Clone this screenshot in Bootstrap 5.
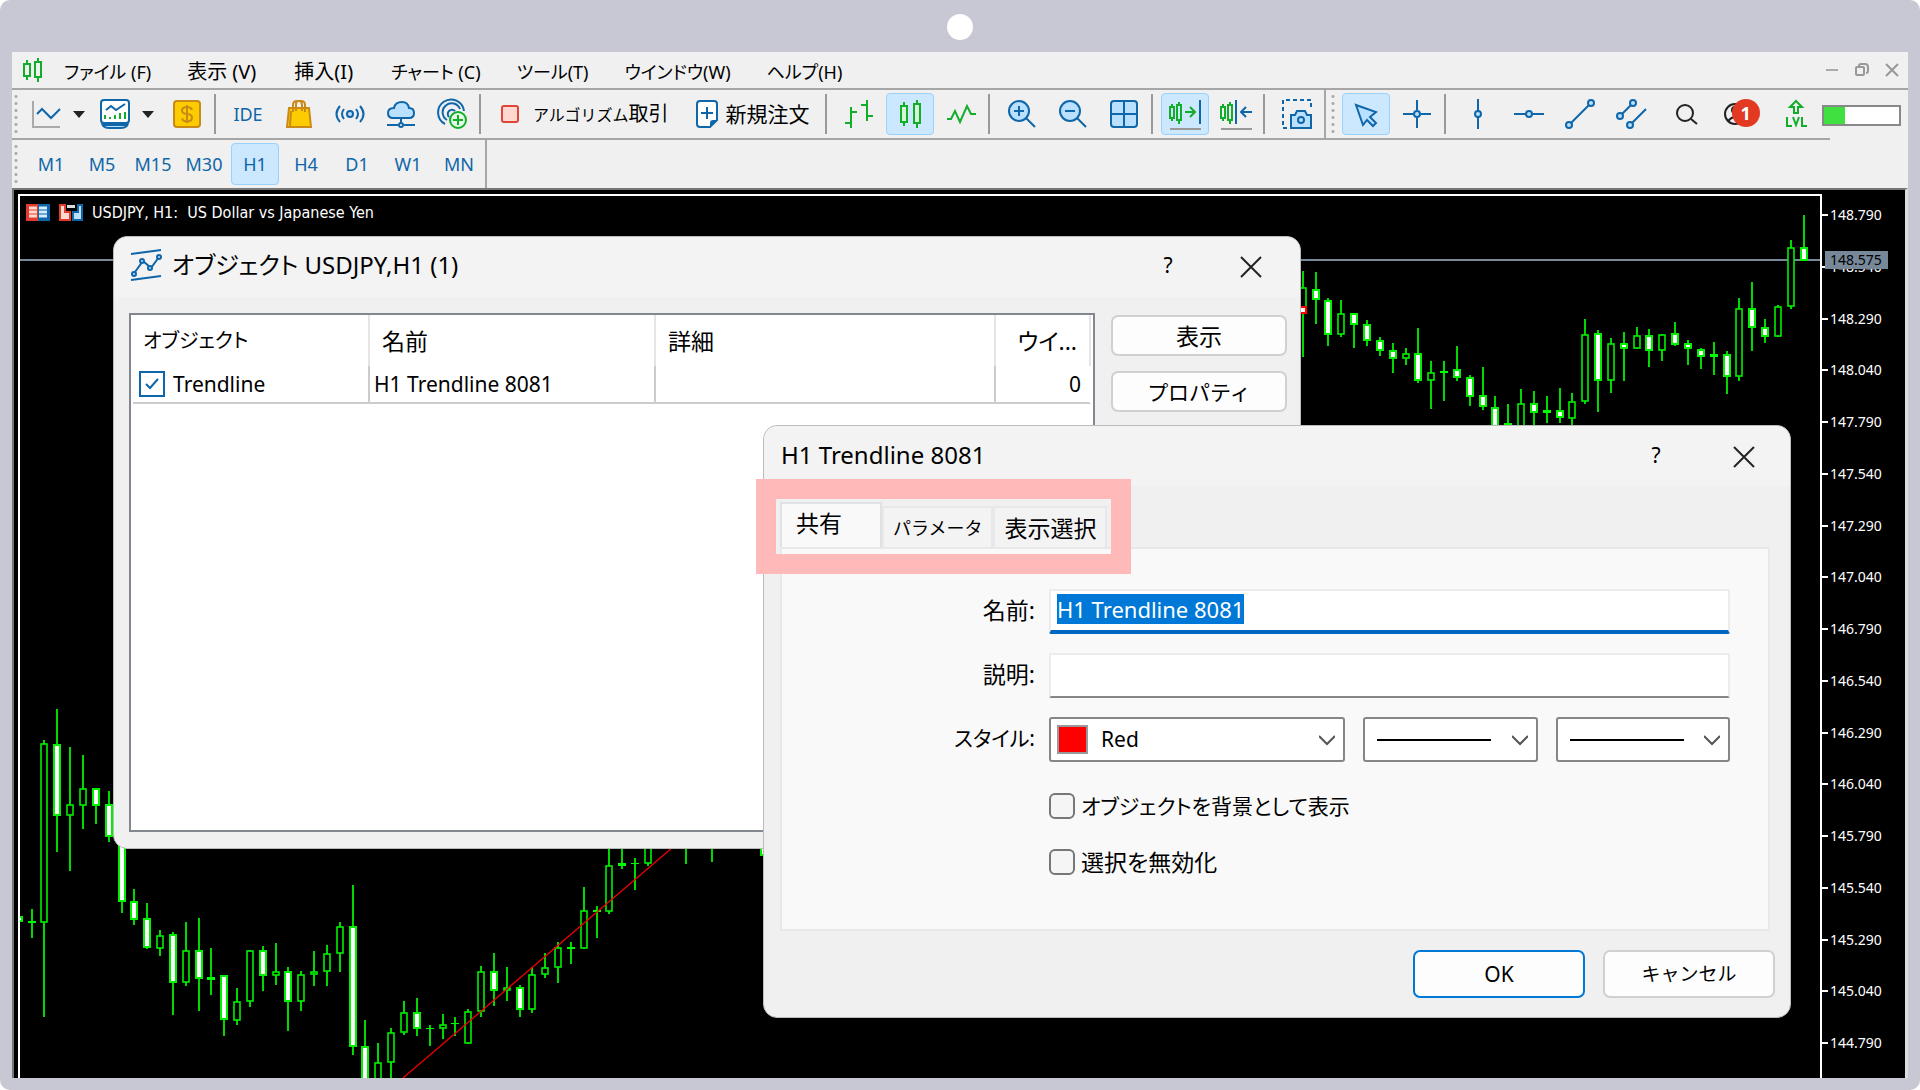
<!DOCTYPE html>
<html lang="ja">
<head>
<meta charset="utf-8">
<meta name="viewport" content="width=device-width, initial-scale=1">
<title>USDJPY, H1</title>
<link href="https://cdn.jsdelivr.net/npm/bootstrap@5.3.0/dist/css/bootstrap.min.css" rel="stylesheet">
<style>
:root{--blue:#0f66a8;--sky:#b9e0ff;--green:#12ad2b;--face:#f0f0f0}
body{background:#fff;color:#000;font-family:"Noto Sans","Noto Sans CJK JP",sans-serif;font-size:21px;line-height:24px;font-feature-settings:"palt"}
.frame{min-height:100vh;background:#c8c7d4;border-radius:10px;padding:0 12px 12px}
.cam{height:52px;padding-top:2px}
.cam span{width:26px;height:26px;background:#fff}
.menubar{height:38px;background:var(--face);border-bottom:2px solid #a6a6a6;padding:0 9px 0 10px}
.menubar nav{gap:36px;margin-left:20px;padding-top:3px}
.menubar nav a{color:#000;text-decoration:none;font-size:18px;white-space:nowrap}
.menubar nav a.wide-text{font-size:20px;padding-right:2px}
.winctl{gap:16px}
.winctl button{border:0;background:none;padding:0;line-height:0}
.tools{background:var(--face);height:50px}
.toolrow{gap:3px;height:50px;border-bottom:2px solid #a6a6a6;padding-right:10px}
.tfrow{background:var(--face);height:48px}
.tfrow .inner{gap:3px;border-right:2px solid #a6a6a6;padding-right:2px}
.tfrow .grip{margin-right:6px}
.grip{width:4px;height:42px;margin:0 1px 0 2px;background:radial-gradient(circle,#aaa 1px,transparent 2px) 0 0/4px 7px}
.tb{width:48px;height:42px;padding:0;border:1px solid transparent;border-radius:4px;background:none;color:var(--blue);display:flex;align-items:center;justify-content:center;flex:none;font-size:18px}
.tb.on{background:#cce8ff;border-color:#99d1ff}
.tb.wide{width:auto;color:#000;padding:0 11px;font-size:21px}
.tb.algo{font-size:20px;gap:14px}
.tb.algo .kana{font-size:16px}
.caret{border:6px solid transparent;border-top:7px solid #222;border-bottom:0;width:0;height:0;padding:0;background:none;margin-right:3px}
.caret.last{margin-right:6px}
.sep{width:2px;height:40px;background:#999;margin-right:5px;flex:none}
.edge{width:2px;height:48px;background:#a6a6a6;flex:none}
.g{fill:none;stroke:var(--green);stroke-width:2}
.b{fill:none;stroke:var(--blue);stroke-width:2}
.bf{fill:var(--sky);stroke:var(--blue);stroke-width:2}
.k{fill:none;stroke:#222;stroke-width:2}
.alert-no{left:18px;top:5px;width:28px;height:28px;border-radius:50%;background:#e23a22;color:#fff;font-weight:700;font-size:18px;line-height:28px}
.conn{width:79px;height:21px;border:2px solid #888;background:#fff;margin-left:-8px}
.conn i{width:28%;height:100%;background:#40e040}
.desk{background:#000;border:solid #777;border-width:2px 3px 0 2px;border-right-color:#ddd;padding:4px 0 0 4px}
.plot{border:2px solid #fff;border-bottom:0;min-width:0}
.plot>svg{position:absolute;inset:0;width:100%;height:100%}
.chead{color:#fff;font-family:"DejaVu Sans Condensed","DejaVu Sans",sans-serif;font-size:16px;line-height:16px;gap:9px;padding:8px 0 0 6px}
.axis{width:83px;color:#fff;font-size:14px;line-height:16px;padding:13px 0 27px}
.axis div{padding-left:8px;background:linear-gradient(#fff,#fff) 0 50%/6px 2px no-repeat}
.pricetag{left:3px;top:57px;background:#778899;color:#000;width:63px;padding:1px 5px}
.win{background:var(--face);border:1px solid #bbb;border-radius:14px;color:#000}
.win header{background:#f3f3f3;border-radius:14px 14px 0 0;font-size:24px}
.win header button{border:0;background:none;width:40px;padding:0;font-size:21px;line-height:24px;margin-left:34px}
.objwin{left:99px;top:46px;width:1188px}
.objwin header{height:60px;padding:0 24px 4px 16px}
.objwin header svg:first-child{margin-right:10px}
.objwin .bd{padding:16px 13px 16px 15px;gap:16px}
.listbox{height:519px;border:2px solid #828790;background:#fff;padding:0 2px}
.listbox table{table-layout:fixed;margin:0;width:100%;font-size:21px;border-collapse:separate;border-spacing:0}
.listbox th{font-weight:400;height:51px;padding:0 12px;border-right:2px solid #e5e5e5;vertical-align:middle}
.listbox th:first-child{font-size:20px;padding-left:10px}
.kanji,.listbox .kanji{font-size:23px}
.listbox td{height:38px;padding:0 4px;border-right:2px solid #ccc;border-bottom:2px solid #ccc;vertical-align:middle}
.listbox td:first-child{padding-left:6px}
.listbox th:last-child,.listbox td:last-child{text-align:right}
.listbox td:last-child{border-right-color:transparent;padding-right:8px}
.c1{width:237px}.c2{width:286px}.c3{width:340px}
.tick{appearance:none;width:26px;height:26px;border:2px solid var(--blue);background:#fff url("data:image/svg+xml,%3Csvg xmlns='http://www.w3.org/2000/svg' viewBox='0 0 22 22'%3E%3Cpath d='M5 11l4 4 8-9' fill='none' stroke='%230f66a8' stroke-width='2'/%3E%3C/svg%3E");margin:0}
.side{gap:15px;padding-top:2px}
.pb{background:#fdfdfd;border:2px solid #d0d0d0;border-radius:7px;width:176px;height:41px;padding:0;color:#000;line-height:24px}
.propwin{left:749px;top:235px;width:1028px;z-index:2}
.propwin header{height:60px;padding:0 26px 2px 17px}
.propwin .bd{padding:16px 15px 19px 16px}
.propwin .nav-tabs{border:0}
.propwin .nav-link{color:#000;border:2px solid #e8e8e8;border-bottom:0;border-radius:0;margin:0;background:#f3f3f3;padding:0 9px;height:41px;white-space:nowrap;min-width:107px;font-size:23px}
.propwin .nav-link.kanatab{font-size:18px}
.propwin .nav-link.active{background:#f9f9f9;width:102px;min-width:0;height:45px;text-align:left;padding:0 14px 6px}
.pane{background:#f9f9f9;border:2px solid #e8e8e8;height:384px;padding:40px 38px 0 0;margin-right:5px}
.frow{display:grid;grid-template-columns:253px 1fr;column-gap:14px;align-items:center;margin-bottom:19px}
.frow.spaced{margin-bottom:31px}
.frow label{text-align:right;padding-bottom:4px}
.field{width:100%;height:45px;border:2px solid #ececec;border-bottom:2px solid #868686;border-radius:2px;background:#fff;padding:0 6px 3px;font-size:22px;line-height:30px;outline:0}
.field.live{border-bottom:4px solid #0067c0}
.field::selection{background:#0078d7;color:#fff}
.styles{display:grid;grid-template-columns:297fr 175fr 175fr;gap:18px}
.sel{--chev:url("data:image/svg+xml,%3Csvg xmlns='http://www.w3.org/2000/svg' viewBox='0 0 16 16'%3E%3Cpath d='M0 4l8 8 8-8' fill='none' stroke='%23555' stroke-width='2'/%3E%3C/svg%3E");min-width:0;height:45px;border:2px solid #868686;border-radius:3px;color:#000;font-size:21px;padding:0 30px 0 50px}
.sel.swatch{background:var(--chev) right 8px center/16px 16px no-repeat,linear-gradient(red,red) 8px 50%/27px 25px no-repeat,linear-gradient(#999,#999) 6px 50%/31px 29px no-repeat #fff}
.sel.stroke{background:var(--chev) right 8px center/16px 16px no-repeat,linear-gradient(#000,#000) 12px 50%/114px 2px no-repeat #fff}
.opt{margin:0 0 30px 267px;gap:6px;height:26px}
.opt input{appearance:none;width:26px;height:26px;border:2px solid #777;border-radius:6px;background:#f5f5f5;margin:0}
.ft{padding-top:19px;gap:18px}
.ft .pb{width:172px;height:48px}
.ft .ok{border-color:#0078d4}
.ft .cancel{font-size:19px}
.marker{left:742px;top:289px;width:375px;height:95px;border:20px solid #ffb9b9;z-index:3;pointer-events:none}
</style>
</head>
<body>
<div class="frame d-flex flex-column">
<div class="cam d-flex align-items-center justify-content-center flex-shrink-0"><span class="rounded-circle"></span></div>
<div class="menubar d-flex align-items-center flex-shrink-0">
  <svg width="22" height="26" viewBox="0 0 22 26"><g class="g"><path d="M5 3v4M5 19v4M16 1v4M16 20v5"/><path d="M2 7h6v12H2zM13 5h6v15h-6z"/></g></svg>
  <nav class="d-flex" aria-label="メニュー">
    <a href="#">ファイル (F)</a><a href="#" class="wide-text">表示 (V)</a><a href="#" class="wide-text">挿入(I)</a><a href="#">チャート (C)</a><a href="#">ツール(T)</a><a href="#">ウインドウ(W)</a><a href="#">ヘルプ(H)</a>
  </nav>
  <div class="winctl ms-auto d-flex align-items-center">
    <button aria-label="最小化"><svg width="14" height="14"><path d="M1 7h12" stroke="#aaa" stroke-width="2"/></svg></button>
    <button aria-label="元に戻す"><svg width="14" height="14" fill="none" stroke="#999" stroke-width="2"><rect x="1" y="4" width="8" height="8" rx="1"/><path d="M4 3q0-2 2-2h4q3 0 3 3v4q0 2-2 2"/></svg></button>
    <button aria-label="閉じる"><svg width="14" height="14"><path d="M1 1l12 12M13 1L1 13" stroke="#999" stroke-width="2"/></svg></button>
  </div>
</div>
<div class="tools d-flex align-items-center flex-shrink-0">
 <div class="toolrow d-flex align-items-center">
  <div class="grip"></div>
  <button class="tb" aria-label="チャート種類"><svg width="32" height="32"><path d="M3 3v26h27" fill="none" stroke="#aaa" stroke-width="2"/><path class="b" d="M7 16l5-5 9 9 9-9"/></svg></button>
  <button class="caret" aria-label="開く"></button>
  <button class="tb" aria-label="インディケータ"><svg width="32" height="32"><path d="M3 24q0 6 7 6h12q7 0 7-6" fill="#b9e0ff" stroke="#0f66a8" stroke-width="2"/><rect x="2" y="2" width="28" height="23" rx="3" fill="#fff" stroke="#0f66a8" stroke-width="2"/><path class="b" d="M3 27h26M7 12l5-4 5 4 9-6"/><path class="g" d="M6 17v4M11 19v2M16 17v4M21 15v6M26 14v7"/></svg></button>
  <button class="caret last" aria-label="開く"></button>
  <button class="tb" aria-label="取引"><svg width="32" height="32"><rect x="3" y="3" width="26" height="26" rx="3" fill="#fccb00" stroke="#c98a17" stroke-width="2"/><path d="M16 7v18M21 12q-1-3-5-3-5 0-5 3.500 0 3 5 3.500t5 3.500q0 4-5 4-4 0-5-3" fill="none" stroke="#c98a17" stroke-width="2"/></svg></button>
  <div class="sep"></div>
  <button class="tb">IDE</button>
  <button class="tb" aria-label="マーケット"><svg width="32" height="32" fill="none" stroke="#c98a17" stroke-width="2"><path fill="#fccb00" d="M6 10h20l2 19H4z"/><path d="M10 14V7q0-4 4-4h4q4 0 4 4v7M13 13V7q0-4 2-4M19 13V7q0-3-2-4M8 13l-1 15"/></svg></button>
  <button class="tb" aria-label="シグナル"><svg width="32" height="32"><circle class="bf" cx="16" cy="16" r="3"/><path class="b" d="M10 11q-4 5 0 10M22 11q4 5 0 10M6 8q-7 8 0 16M26 8q7 8 0 16"/></svg></button>
  <button class="tb" aria-label="VPS"><svg width="32" height="32"><path class="bf" d="M8 20q-5 0-5-5t6-5q1-6 8-6 6 0 7 6 5 0 5 5t-5 5z"/><path class="b" d="M16 20v5M2 27h11M19 27h11"/><circle class="b" cx="16" cy="27" r="2"/></svg></button>
  <button class="tb" aria-label="コミュニティ"><svg width="32" height="32"><path class="b" d="M9 26A13 13 0 1 1 28 13M11 22A9 9 0 1 1 24 11M13 19A4 4 0 1 1 19 13"/><circle cx="22" cy="22" r="8" fill="#e3f9e3" stroke="#12ad2b" stroke-width="2"/><path class="g" d="M22 17v10M17 22h10"/></svg></button>
  <div class="sep"></div>
  <button class="tb wide algo"><svg width="18" height="18"><rect x="1" y="1" width="16" height="16" rx="2" fill="#ffd9d0" stroke="#e0453a" stroke-width="2"/></svg><span><span class="kana">アルゴリズム</span>取引</span></button>
  <button class="tb wide"><svg width="22" height="28" class="me-2"><path d="M4 1h14q3 0 3 3v16l-7 7H4q-3 0-3-3V4q0-3 3-3z" fill="#fff" stroke="#0f66a8" stroke-width="2"/><path d="M14 27v-4q0-3 3-3h4z" fill="#0f66a8"/><path class="b" d="M11 7v12M5 13h12"/></svg><span>新規注文</span></button>
  <div class="sep"></div>
  <button class="tb" aria-label="バー"><svg width="32" height="32"><path class="g" d="M8 9v21M2 25h6M8 14h6M24 2v21M18 7h6M24 18h6"/></svg></button>
  <button class="tb on" aria-label="ローソク足"><svg width="32" height="32"><g fill="#d5f7d5" stroke="#12ad2b" stroke-width="2"><path d="M10 4v5M10 23v5M23 2v5M23 24v6"/><path d="M7 8h6v16H7zM20 6h6v19h-6z"/></g></svg></button>
  <button class="tb" aria-label="ライン"><svg width="32" height="32"><path class="g" d="M2 21h4l4-8 5 11 7-16 4 8h5"/></svg></button>
  <div class="sep"></div>
  <button class="tb" aria-label="拡大"><svg width="32" height="32"><circle class="bf" cx="13" cy="13" r="10"/><path class="b" d="M13 8v10M8 13h10M20 20l9 9"/></svg></button>
  <button class="tb" aria-label="縮小"><svg width="32" height="32"><circle class="bf" cx="13" cy="13" r="10"/><path class="b" d="M8 13h10M20 20l9 9"/></svg></button>
  <button class="tb" aria-label="タイル"><svg width="32" height="32"><rect class="bf" x="3" y="3" width="26" height="26" rx="3"/><path class="b" d="M16 3v26M3 16h26"/></svg></button>
  <div class="sep"></div>
  <button class="tb on" aria-label="自動スクロール"><svg width="32" height="32"><path class="g" d="M3 6v3M3 19v4M10 4v3M10 22v4M1 9h4v11H1zM8 7h4v15H8zM16 14h10M21 9l5 5-5 5"/><path class="b" d="M31 2v24"/><path d="M1 31h31" stroke="#999" stroke-width="2"/></svg></button>
  <button class="tb" aria-label="チャートシフト"><svg width="32" height="32"><path class="g" d="M3 6v3M3 19v4M10 4v3M10 22v4M1 9h4v11H1zM8 7h4v15H8z"/><path class="b" d="M16 2v24M21 14h11M26 9l-5 5 5 5"/><path d="M1 31h31" stroke="#999" stroke-width="2"/></svg></button>
  <div class="sep"></div>
  <button class="tb" aria-label="スクリーンショット"><svg width="32" height="32"><path class="b" stroke-dasharray="4 3" d="M6 30H2V2h28v10"/><path class="bf" d="M10 17h4l2-4h8l2 4h4v13H10z"/><circle class="b" cx="20" cy="22" r="3"/></svg></button>
  <div class="edge"></div><div class="grip me-1"></div>
  <button class="tb on" aria-label="カーソル"><svg width="32" height="32"><path class="bf" d="M6 7l20 7-6 5 6 6-3 3-6-6-4 5z"/></svg></button>
  <button class="tb" aria-label="十字線"><svg width="32" height="32"><path class="b" d="M16 2v10M16 20v10M2 16h10M20 16h10"/><circle class="bf" cx="16" cy="16" r="3"/></svg></button>
  <div class="sep"></div>
  <button class="tb" aria-label="垂直線"><svg width="32" height="32"><path class="b" d="M16 1v30"/><circle class="bf" cx="16" cy="16" r="3"/></svg></button>
  <button class="tb" aria-label="水平線"><svg width="32" height="32"><path class="b" d="M1 16h30"/><circle class="bf" cx="16" cy="16" r="3"/></svg></button>
  <button class="tb" aria-label="トレンドライン"><svg width="32" height="32"><path class="b" d="M5 27L27 5"/><circle class="bf" cx="5" cy="27" r="3"/><circle class="bf" cx="27" cy="5" r="3"/></svg></button>
  <button class="tb" aria-label="チャネル"><svg width="32" height="32"><path class="b" d="M5 18L18 5M15 27l16-16"/><circle class="bf" cx="5" cy="18" r="3"/><circle class="bf" cx="18" cy="5" r="3"/><circle class="bf" cx="15" cy="27" r="3"/></svg></button>
  <button class="tb ms-1" aria-label="検索"><svg width="32" height="32"><circle class="k" cx="15" cy="15" r="8"/><path class="k" d="M21 21l6 5"/></svg></button>
  <button class="tb position-relative" aria-label="アカウント"><svg width="32" height="32"><circle class="k" cx="14" cy="16" r="10"/><circle class="k" cx="14" cy="12" r="3"/><path class="k" d="M7 23q7-8 14 0"/></svg><span class="alert-no position-absolute">1</span></button>
  <button class="tb ms-2" aria-label="レベル"><svg width="32" height="32"><path class="g" d="M14 15V9h-4l6-6 6 6h-4v6z"/><path class="g" d="M7 19v9h5M13 19l3 8 3-8M22 19v9h5"/></svg></button>
 </div>
 <div class="conn"><i class="d-block"></i></div>
</div>
<div class="tfrow d-flex flex-shrink-0"><div class="inner d-flex align-items-center">
  <div class="grip"></div>
  <button class="tb">M1</button><button class="tb">M5</button><button class="tb">M15</button><button class="tb">M30</button><button class="tb on">H1</button><button class="tb">H4</button><button class="tb">D1</button><button class="tb">W1</button><button class="tb">MN</button>
</div></div>
<main class="desk d-flex flex-grow-1 position-relative">
  <div class="plot flex-grow-1 position-relative">
    <svg id="chart" viewBox="20 196 1800 882" preserveAspectRatio="xMinYMin slice" role="img" aria-label="USDJPY H1"></svg>
    <div class="chead d-flex align-items-center position-relative">
      <svg width="24" height="17"><rect width="12" height="17" fill="#e23a2e"/><rect x="12" width="12" height="17" fill="#0f66a8"/><path d="M3 4h8M3 8h8M3 12h8" stroke="#ffd9d0" stroke-width="3"/><path d="M13 4h8M13 8h8M13 12h8" stroke="#d5ecff" stroke-width="3"/></svg>
      <svg width="24" height="17"><path d="M1 1h5v7h5v8H1z" fill="#ffd9d0" stroke="#e23a2e" stroke-width="2"/><path d="M23 1h-4v7h-5v8h9z" fill="#b9e0ff" stroke="#0f66a8" stroke-width="2"/><path d="M8 1h8v3H8z" fill="#ddd"/></svg>
      <span>USDJPY, H1:&nbsp; US Dollar vs Japanese Yen</span>
    </div>
  </div>
  <div class="axis d-flex flex-column justify-content-between position-relative flex-shrink-0">
    <div>148.790</div><div>148.540</div><div>148.290</div><div>148.040</div><div>147.790</div><div>147.540</div><div>147.290</div><div>147.040</div><div>146.790</div><div>146.540</div><div>146.290</div><div>146.040</div><div>145.790</div><div>145.540</div><div>145.290</div><div>145.040</div><div>144.790</div>
    <span class="pricetag position-absolute">148.575</span>
  </div>

  <section class="win objwin position-absolute">
    <header class="d-flex align-items-center">
      <svg width="32" height="32"><path class="b" d="M1 5l30-4M1 31l30-4M5 23l8-11 8 7 8-11"/><circle class="bf" cx="4" cy="25" r="2"/><circle class="bf" cx="12" cy="12" r="2"/><circle class="bf" cx="20" cy="19" r="2"/><circle class="bf" cx="29" cy="8" r="2"/></svg>
      <span>オブジェクト USDJPY,H1 (1)</span>
      <button class="ms-auto" aria-label="ヘルプ">?</button><button class="ms-5" aria-label="閉じる"><svg width="22" height="22"><path d="M1 1l20 20M21 1L1 21" stroke="#222" stroke-width="2"/></svg></button>
    </header>
    <div class="bd d-flex">
      <div class="listbox flex-grow-1">
        <table><colgroup><col class="c1"><col class="c2"><col class="c3"><col></colgroup>
          <thead><tr><th scope="col">オブジェクト</th><th scope="col" class="kanji">名前</th><th scope="col" class="kanji">詳細</th><th scope="col" class="kanji">ウイ...</th></tr></thead>
          <tbody><tr><td><div class="d-flex align-items-center gap-2"><input class="tick" type="checkbox" checked id="t1"><label for="t1">Trendline</label></div></td><td>H1 Trendline 8081</td><td></td><td>0</td></tr></tbody>
        </table>
      </div>
      <div class="side d-flex flex-column">
        <button class="pb kanji">表示</button><button class="pb">プロパティ</button>
      </div>
    </div>
  </section>

  <section class="win propwin position-absolute">
    <header class="d-flex align-items-center"><span>H1 Trendline 8081</span>
      <button class="ms-auto" aria-label="ヘルプ">?</button><button class="ms-5" aria-label="閉じる"><svg width="22" height="22"><path d="M1 1l20 20M21 1L1 21" stroke="#222" stroke-width="2"/></svg></button>
    </header>
    <div class="bd">
      <div class="nav nav-tabs d-flex align-items-end" role="tablist">
        <button class="nav-link active" role="tab">共有</button><button class="nav-link kanatab" role="tab">パラメータ</button><button class="nav-link" role="tab">表示選択</button>
      </div>
      <form class="pane" onsubmit="return false">
        <div class="frow"><label for="nm" class="kanji">名前:</label><input class="field live" id="nm" type="text" value="H1 Trendline 8081"></div>
        <div class="frow"><label for="ds" class="kanji">説明:</label><input class="field" id="ds" type="text"></div>
        <div class="frow spaced"><label for="st">スタイル:</label>
          <div class="styles"><select class="form-select sel swatch" id="st"><option>Red</option></select><select class="form-select sel stroke" aria-label="線種"><option></option></select><select class="form-select sel stroke" aria-label="太さ"><option></option></select></div></div>
        <div class="opt d-flex align-items-center"><input type="checkbox" id="o1"><label for="o1">オブジェクトを背景として表示</label></div>
        <div class="opt d-flex align-items-center"><input type="checkbox" id="o2"><label for="o2" class="kanji">選択を無効化</label></div>
      </form>
      <div class="ft d-flex justify-content-end"><button class="pb ok">OK</button><button class="pb cancel">キャンセル</button></div>
    </div>
  </section>
  <div class="marker position-absolute"></div>
</main>
</div>
<script src="https://cdn.jsdelivr.net/npm/bootstrap@5.3.0/dist/js/bootstrap.bundle.min.js"></script>
<script>
// Each candle: slot, high, low, body top, body bottom, kind (f = falling, r = rising, d = flat)
const candles = `0 916 922 916 922 f|1 909 938 921 923 d|2 740 1017 743 923 r|3 709 852 744 816 f|4 747 871 804 816 r|5 755 829 788 806 r|6 788 824 788 806 f|7 791 842 804 837 f|8 836 913 836 902 f|9 889 925 901 920 f|10 903 949 918 948 f|11 930 956 935 949 r|12 932 1015 934 983 f|13 922 986 950 983 r|14 918 1011 950 979 f|15 948 995 977 980 d|16 975 1036 975 1020 f|17 988 1025 1001 1021 r|18 950 1007 950 1002 r|19 946 991 950 976 f|20 943 985 971 976 r|21 967 1031 971 1002 f|22 971 1011 974 1002 r|23 951 986 971 975 r|24 945 986 953 972 r|25 922 972 926 954 r|26 885 1055 926 1047 f|27 1020 1090 1046 1090 f|28 1043 1090 1062 1090 r|29 1028 1090 1032 1063 r|30 1001 1035 1012 1033 r|31 998 1036 1012 1029 f|32 1025 1046 1028 1029 d|33 1014 1039 1024 1029 r|34 1017 1036 1023 1024 d|35 1009 1044 1011 1044 r|36 966 1017 971 1012 r|37 953 1006 971 991 f|38 967 1001 987 991 r|39 985 1017 987 1010 f|40 967 1013 974 1010 r|41 953 978 967 975 r|42 942 983 947 968 r|43 942 964 947 949 d|44 887 949 910 949 r|45 906 938 910 912 d|46 840 914 865 912 r|47 840 869 863 866 d|48 858 890 863 864 d|49 840 866 840 864 r|52 840 864 840 842 d|54 840 862 840 842 d|58 840 856 840 856 f|100 271 357 287 310 r|101 272 324 289 300 f|102 298 346 300 335 f|103 300 337 313 335 r|104 313 348 313 325 f|105 320 346 324 341 f|106 337 356 340 351 f|107 343 373 350 359 f|108 348 365 353 359 r|109 328 383 353 381 f|110 361 409 372 381 r|111 361 401 371 373 d|112 346 381 369 378 f|113 375 406 377 397 f|114 367 410 395 407 f|115 396 430 407 430 f|116 404 430 423 426 d|117 389 430 403 430 r|118 391 425 403 413 f|119 396 423 410 413 d|120 388 423 410 418 f|121 393 425 401 419 r|122 319 404 334 402 r|123 330 412 333 381 f|124 338 393 343 381 r|125 332 381 343 349 f|126 327 349 335 349 r|127 329 367 335 351 f|128 334 361 334 351 r|129 322 346 333 345 f|130 340 365 343 349 f|131 348 369 349 357 f|132 342 375 354 357 d|133 351 394 354 377 f|134 298 381 308 377 r|135 282 351 308 328 f|136 319 343 327 337 f|137 305 337 306 337 r|138 240 309 247 307 r|139 215 261 247 261 f`;
let out = '<path d="M20 260H1822" stroke="#778899" stroke-width="2"/>';
for (const row of candles.split('|')) {
  const [i, hi, lo, t, b, k] = row.split(' ');
  const x = Math.round(18.8 + 12.84 * i);
  const fill = k === 'f' ? '#fff' : k === 'r' ? '#000' : '#0f0';
  out += `<path d="M${x} ${hi}V${lo}" stroke="#00d800" stroke-width="2"/>`;
  out += k === 'd'
    ? `<rect x="${x - 4}" y="${t}" width="8" height="${Math.max(1, b - t)}" fill="#0f0"/>`
    : `<rect x="${x - 3}" y="${+t + 1}" width="6" height="${Math.max(1, b - t - 2)}" fill="${fill}" stroke="#00f000" stroke-width="${k === 'f' ? 2 : 1.6}"/>`;
}
out += '<path d="M403 1078L680 841" stroke="#f00000" stroke-width="1.3"/><rect x="1300" y="307" width="6" height="6" fill="#fff" stroke="red" stroke-width="2"/>';
document.getElementById('chart').innerHTML = out;
const nm = document.getElementById('nm');
nm.focus({preventScroll: true});
nm.select();
</script>
</body>
</html>
